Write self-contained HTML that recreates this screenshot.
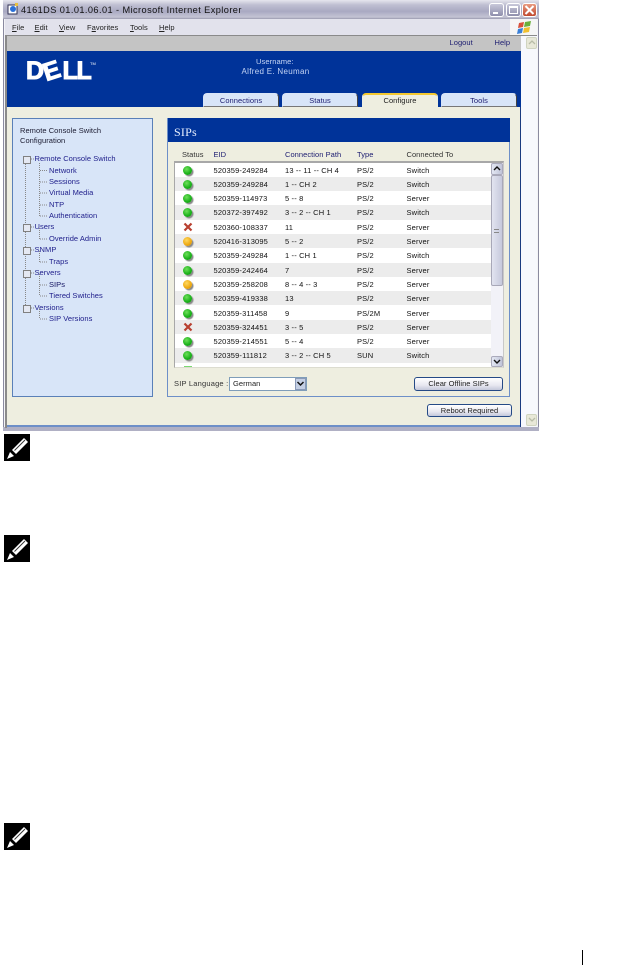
<!DOCTYPE html>
<html><head><meta charset="utf-8"><style>
html,body{margin:0;padding:0;background:#fff;width:641px;height:965px;overflow:hidden}
div,span{position:absolute;box-sizing:border-box}
#w{left:0;top:0;width:641px;height:965px;font:7.5px/10px "Liberation Sans",sans-serif;letter-spacing:.05px;color:#2a2a2a;white-space:nowrap;filter:blur(.3px)}
.n{color:#20208c}
.t{color:#1c1c70}
.r{left:174px;width:317px;height:14.3px;background:#fff;letter-spacing:.15px;color:#111}
.g{background:#ececec}
.r span{top:3px}
.a{left:39.5px}.b{left:111px}.c{left:183px}.d{left:232.5px}
.o{left:9px;top:3px;width:9px;height:9px;border-radius:50%;background:radial-gradient(circle at 40% 35%,#6fe05a,#18b018 60%,#0c860c);box-shadow:1.5px 1.5px 1px #888}
.y{background:radial-gradient(circle at 40% 35%,#ffd860,#eda810 60%,#b87c08)}
.x{left:9px;top:2px}
.s{left:23px;width:8px;height:8px;background:#e4e8f2;border:1px solid #808080}
.btn{background:linear-gradient(#fff,#e8e8f0 60%,#c4c8da);border:1px solid #254a86;border-radius:3px;text-align:center;color:#222}
.tab{top:93px;width:76px;height:14px;background:#d8e5f8;border:1px solid #d8e5f8;border-right:1px solid #444;border-bottom:1px solid #777;border-radius:4px 4px 0 0;text-align:center;line-height:13px;color:#1c1c70}
.ni{left:4px;width:26px;height:27px;background:#000}
.dl{top:60.3px;font:900 25px/22px "Liberation Sans",sans-serif;color:#fff;-webkit-text-stroke:1px #fff;letter-spacing:0}
</style></head><body><div id="w">

<div style="left:3px;top:0;width:536px;height:431px;background:#f3f3f7;border:1px solid #8a8aa0;border-top:0"></div>
<div style="left:3px;top:0;width:536px;height:19px;background:linear-gradient(#e6e6ee,#c0c0d2 25%,#a9a9c2 60%,#c4c4d4 90%,#9a9ab0)"></div>
<svg style="position:absolute;left:7px;top:3px" width="12" height="12"><rect x="1" y="2" width="9" height="9" fill="#fff" stroke="#335"/><circle cx="6" cy="6" r="3" fill="#2a70d8"/><rect x="8" y="0" width="3" height="3" fill="#e8c040"/></svg>
<div style="left:21px;top:5px;font-size:9.2px;letter-spacing:.43px;color:#111;line-height:11px">4161DS 01.01.06.01 - Microsoft Internet Explorer</div>
<div style="left:489px;top:3px;width:15px;height:14px;background:linear-gradient(#c8c8da,#8f8fac);border:1px solid #fff;border-radius:3px"></div>
<div style="left:493px;top:12px;width:5px;height:2px;background:#fff"></div>
<div style="left:506px;top:3px;width:15px;height:14px;background:linear-gradient(#c8c8da,#8f8fac);border:1px solid #fff;border-radius:3px"></div>
<div style="left:509px;top:6px;width:9px;height:8px;border:1px solid #fff;border-top:2px solid #fff"></div>
<div style="left:522px;top:3px;width:15px;height:14px;background:linear-gradient(#e89a80,#c04a30);border:1px solid #fff;border-radius:3px"></div>
<svg style="position:absolute;left:524px;top:5px" width="11" height="10"><path d="M1.5 1l8 8M9.5 1l-8 8" stroke="#fff" stroke-width="2"/></svg>

<div style="left:5px;top:19px;width:532px;height:17px;background:#e2e2ec;border-bottom:1px solid #8a8a8a"></div>
<div style="left:510px;top:19px;width:27px;height:16px;background:#f6f6f6"></div>
<svg style="position:absolute;left:517px;top:20px" width="15" height="15"><path d="M2 3l5-1-1 5-5 1z" fill="#d8503a"/><path d="M8 2l6-1-1 5-6 1z" fill="#6ab03c"/><path d="M1 9l5-1-1 5-5 1z" fill="#3a80d8"/><path d="M7 8l6-1-1 5-6 1z" fill="#f0c030"/></svg>
<div style="left:12px;top:22px;line-height:11px;color:#222"><u>F</u>ile</div>
<div style="left:34.5px;top:22px;line-height:11px;color:#222"><u>E</u>dit</div>
<div style="left:59px;top:22px;line-height:11px;color:#222"><u>V</u>iew</div>
<div style="left:87px;top:22px;line-height:11px;color:#222">F<u>a</u>vorites</div>
<div style="left:130px;top:22px;line-height:11px;color:#222"><u>T</u>ools</div>
<div style="left:159px;top:22px;line-height:11px;color:#222"><u>H</u>elp</div>

<div style="left:7px;top:36px;width:514px;height:15px;background:#c4c4c4"></div>
<div style="left:449.5px;top:38px" class="t">Logout</div>
<div style="left:494.5px;top:38px" class="t">Help</div>
<div style="left:7px;top:51px;width:514px;height:56px;background:#003399"></div>
<div style="left:521px;top:36px;width:16px;height:392px;background:#f7f8fd"></div>
<div style="left:526px;top:37px;width:11px;height:12px;background:#e8e8d8;border:1px solid #d0d4c0;border-radius:2px"></div>
<svg style="position:absolute;left:528px;top:40px" width="8" height="6"><path d="M1 4l3-3 3 3" fill="none" stroke="#b8bca8" stroke-width="1.3"/></svg>
<div style="left:526px;top:414px;width:11px;height:12px;background:#e8e8d8;border:1px solid #d0d4c0;border-radius:2px"></div>
<svg style="position:absolute;left:528px;top:417px" width="8" height="6"><path d="M1 1l3 3 3-3" fill="none" stroke="#b8bca8" stroke-width="1.3"/></svg>

<div class="dl" style="left:26px">D</div>
<div class="dl" style="left:44px;transform:rotate(-18deg);transform-origin:50% 60%">E</div>
<div class="dl" style="left:62.5px">L</div>
<div class="dl" style="left:76.5px">L</div>
<div style="left:90px;top:61px;font-size:4px;line-height:5px;color:#fff">TM</div>
<div style="left:256px;top:57px;color:#c4d4f4;font-size:7.6px">Username:</div>
<div style="left:241.5px;top:67px;font-size:8px;letter-spacing:.3px;color:#c4d4f4">Alfred E. Neuman</div>

<div class="tab" style="left:203px">Connections</div>
<div class="tab" style="left:282px">Status</div>
<div class="tab" style="left:362px;width:76px;background:#eeeee0;border-color:#eeeee0;border-top:2px solid #f4c830;border-radius:4px 4px 0 0;line-height:12px;height:15px;color:#222">Configure</div>
<div class="tab" style="left:441px">Tools</div>

<div style="left:7px;top:107px;width:514px;height:318px;background:#eeeee0"></div>
<div style="left:7px;top:425px;width:514px;height:2px;background:#6d8fc8"></div>
<div style="left:3px;top:427px;width:536px;height:4px;background:#b0b0c4"></div>
<div style="left:5px;top:36px;width:2px;height:392px;background:#8a8a8a"></div>
<div style="left:520px;top:107px;width:1px;height:320px;background:#1a3a80"></div>

<div style="left:12px;top:118px;width:141px;height:279px;background:#d8e5f8;border:1px solid #5a80b8"></div>
<div style="left:20px;top:126px;color:#1a1a30">Remote Console Switch</div>
<div style="left:20px;top:135.5px;color:#1a1a30">Configuration</div>

<svg style="position:absolute;left:20px;top:155px" width="35" height="170"><g fill="none" stroke="#888" stroke-dasharray="1 1"><path d="M5.5 3V153"/><path d="M11 4h3M19.5 8V61M20 15.5h8M20 27h8M20 38h8M20 50h8M20 61h8M11 72h3M19.5 73V84M20 84h8M11 95h3M19.5 96V107M20 107h8M11 118h3M19.5 119V141M20 130h8M20 141h8M11 153h3M19.5 154V164M20 164h8"/></g></svg>
<div class="s" style="top:156px"></div><div class="s" style="top:224px"></div><div class="s" style="top:247px"></div><div class="s" style="top:270px"></div><div class="s" style="top:304.5px"></div>
<div class="n" style="left:34.5px;top:154px">Remote Console Switch</div>
<div class="n" style="left:49px;top:165.5px">Network</div>
<div class="n" style="left:49px;top:177px">Sessions</div>
<div class="n" style="left:49px;top:188px">Virtual Media</div>
<div class="n" style="left:49px;top:200px">NTP</div>
<div class="n" style="left:49px;top:211px">Authentication</div>
<div class="n" style="left:34.5px;top:222px">Users</div>
<div class="n" style="left:49px;top:234px">Override Admin</div>
<div class="n" style="left:34.5px;top:245px">SNMP</div>
<div class="n" style="left:49px;top:257px">Traps</div>
<div class="n" style="left:34.5px;top:268px">Servers</div>
<div class="n" style="left:49px;top:280px;color:#101060">SIPs</div>
<div class="n" style="left:49px;top:291px">Tiered Switches</div>
<div class="n" style="left:34.5px;top:303px">Versions</div>
<div class="n" style="left:49px;top:314px">SIP Versions</div>

<div style="left:167px;top:118px;width:343px;height:279px;background:#eeeee0;border:1px solid #6d8fc8"></div>
<div style="left:168px;top:118px;width:342px;height:24px;background:#003399"></div>
<div style="left:174px;top:124.5px;font:12px/14px 'Liberation Serif',serif;letter-spacing:.2px;color:#e8f0ff">SIPs</div>

<div style="left:182px;top:150px;color:#333">Status</div>
<div style="left:213.5px;top:150px" class="t">EID</div>
<div style="left:285px;top:150px" class="t">Connection Path</div>
<div style="left:357px;top:150px" class="t">Type</div>
<div style="left:406.5px;top:150px;color:#333">Connected To</div>

<div style="left:174px;top:162px;width:330px;height:206px;background:#fff"></div>
<div class="r" style="top:162.5px"><div class="o"></div><span class="a">520359-249284</span><span class="b">13 -- 11 -- CH 4</span><span class="c">PS/2</span><span class="d">Switch</span></div>
<div class="r g" style="top:176.8px"><div class="o"></div><span class="a">520359-249284</span><span class="b">1 -- CH 2</span><span class="c">PS/2</span><span class="d">Switch</span></div>
<div class="r" style="top:191.1px"><div class="o"></div><span class="a">520359-114973</span><span class="b">5 -- 8</span><span class="c">PS/2</span><span class="d">Server</span></div>
<div class="r g" style="top:205.4px"><div class="o"></div><span class="a">520372-397492</span><span class="b">3 -- 2 -- CH 1</span><span class="c">PS/2</span><span class="d">Switch</span></div>
<div class="r" style="top:219.7px"><svg class="x" style="position:absolute" width="10" height="10"><path d="M1.5 1.5l7 7M8.5 1.5l-7 7" stroke="#b84030" stroke-width="2.2"/></svg><span class="a">520360-108337</span><span class="b">11</span><span class="c">PS/2</span><span class="d">Server</span></div>
<div class="r g" style="top:234px"><div class="o y"></div><span class="a">520416-313095</span><span class="b">5 -- 2</span><span class="c">PS/2</span><span class="d">Server</span></div>
<div class="r" style="top:248.3px"><div class="o"></div><span class="a">520359-249284</span><span class="b">1 -- CH 1</span><span class="c">PS/2</span><span class="d">Switch</span></div>
<div class="r g" style="top:262.6px"><div class="o"></div><span class="a">520359-242464</span><span class="b">7</span><span class="c">PS/2</span><span class="d">Server</span></div>
<div class="r" style="top:276.9px"><div class="o y"></div><span class="a">520359-258208</span><span class="b">8 -- 4 -- 3</span><span class="c">PS/2</span><span class="d">Server</span></div>
<div class="r g" style="top:291.2px"><div class="o"></div><span class="a">520359-419338</span><span class="b">13</span><span class="c">PS/2</span><span class="d">Server</span></div>
<div class="r" style="top:305.5px"><div class="o"></div><span class="a">520359-311458</span><span class="b">9</span><span class="c">PS/2M</span><span class="d">Server</span></div>
<div class="r g" style="top:319.8px"><svg class="x" style="position:absolute" width="10" height="10"><path d="M1.5 1.5l7 7M8.5 1.5l-7 7" stroke="#b84030" stroke-width="2.2"/></svg><span class="a">520359-324451</span><span class="b">3 -- 5</span><span class="c">PS/2</span><span class="d">Server</span></div>
<div class="r" style="top:334.1px"><div class="o"></div><span class="a">520359-214551</span><span class="b">5 -- 4</span><span class="c">PS/2</span><span class="d">Server</span></div>
<div class="r g" style="top:348.4px"><div class="o"></div><span class="a">520359-111812</span><span class="b">3 -- 2 -- CH 5</span><span class="c">SUN</span><span class="d">Switch</span></div>
<div style="left:184px;top:366px;width:8px;height:1.5px;background:#7ad870"></div>
<div style="left:174px;top:161px;width:330px;height:207px;border-top:2px solid #a8a8a8;border-left:1px solid #a8a8a8;border-right:1px solid #c8c8c8;border-bottom:1px solid #dcdcd0"></div>

<div style="left:491px;top:163px;width:12px;height:204px;background:#f2f2f8"></div>
<div style="left:491px;top:163px;width:12px;height:12px;background:linear-gradient(90deg,#e4e8f4,#c0c4d8);border:1px solid #aab;border-radius:2px"></div>
<svg style="position:absolute;left:493px;top:166px" width="8" height="6"><path d="M1 4l3-3 3 3" fill="none" stroke="#111" stroke-width="1.4"/></svg>
<div style="left:491px;top:175px;width:12px;height:111px;background:linear-gradient(90deg,#e2e4f0,#c6c9dc);border:1px solid #a8a8b8;border-radius:2px"></div>
<div style="left:494px;top:229px;width:5px;height:4px;border-top:1px solid #888;border-bottom:1px solid #888"></div>
<div style="left:491px;top:356px;width:12px;height:11px;background:linear-gradient(90deg,#e4e8f4,#c0c4d8);border:1px solid #aab;border-radius:2px"></div>
<svg style="position:absolute;left:493px;top:359px" width="8" height="6"><path d="M1 1l3 3 3-3" fill="none" stroke="#111" stroke-width="1.4"/></svg>

<div style="left:174px;top:379px;color:#333;letter-spacing:.2px">SIP Language :</div>
<div style="left:229px;top:377px;width:78px;height:14px;background:#fff;border:1px solid #7f9db9;line-height:12px;padding-left:3px;color:#222">German</div>
<div style="left:295px;top:378px;width:11px;height:12px;background:#c4cfe4;border:1px solid #8a9ab8"></div>
<svg style="position:absolute;left:296px;top:381px" width="9" height="6"><path d="M1.5 1l3 3 3-3" fill="none" stroke="#111" stroke-width="1.5"/></svg>

<div class="btn" style="left:414px;top:377px;width:89px;height:14px;line-height:12px">Clear Offline SIPs</div>
<div class="btn" style="left:427px;top:404px;width:85px;height:13px;line-height:11px">Reboot Required</div>

<div class="ni" style="top:434px"><svg width="26" height="27"><path d="M8 16L20 4l4 4L12 20z" fill="#fff"/><path d="M10.5 16.5L21 6" stroke="#333" stroke-width="1"/><path d="M3 25l3-7 4 4z" fill="#fff"/></svg></div>
<div class="ni" style="top:535px"><svg width="26" height="27"><path d="M8 16L20 4l4 4L12 20z" fill="#fff"/><path d="M10.5 16.5L21 6" stroke="#333" stroke-width="1"/><path d="M3 25l3-7 4 4z" fill="#fff"/></svg></div>
<div class="ni" style="top:823px"><svg width="26" height="27"><path d="M8 16L20 4l4 4L12 20z" fill="#fff"/><path d="M10.5 16.5L21 6" stroke="#333" stroke-width="1"/><path d="M3 25l3-7 4 4z" fill="#fff"/></svg></div>

<div style="left:582px;top:950px;width:1px;height:15px;background:#000"></div>
</div></body></html>
